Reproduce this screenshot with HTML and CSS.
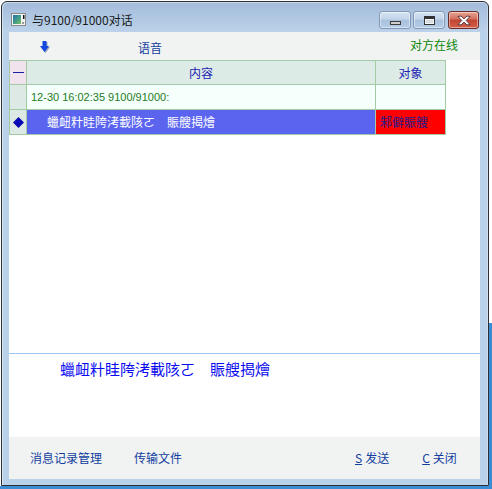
FILE: index.html
```html
<!DOCTYPE html>
<html lang="zh-CN">
<head>
<meta charset="utf-8">
<title>与9100/91000对话</title>
<link rel="stylesheet" href="styles.css">
</head>
<body>
<div class="window">
  <div class="titlebar">
    <svg class="appicon" width="15" height="13" viewBox="0 0 15 13">
      <defs>
        <linearGradient id="ig" x1="0" y1="0" x2="1" y2="1">
          <stop offset="0" stop-color="#2f6fa8"/>
          <stop offset="0.5" stop-color="#3f9a8a"/>
          <stop offset="1" stop-color="#7cc060"/>
        </linearGradient>
      </defs>
      <rect x="0.5" y="0.5" width="14" height="12" fill="#f4f4f4" stroke="#8a8a8a"/>
      <rect x="2" y="2" width="8" height="9" fill="url(#ig)"/>
      <rect x="12" y="2" width="1.5" height="4" fill="#111"/>
      <rect x="11" y="9" width="2" height="2" fill="#9a9a9a"/>
    </svg>
    <span class="title">与9100/91000对话</span>
    <div class="caption">
      <div class="cbtn cmin"><i></i></div>
      <div class="cbtn cmax"><i></i></div>
      <div class="cbtn cclose">
        <svg width="14" height="11" viewBox="0 0 14 11">
          <path d="M1 1.5 L4 1 L7 3.8 L10 1 L13 1.5 L9.2 5.5 L13 9.5 L10 10 L7 7.2 L4 10 L1 9.5 L4.8 5.5 Z" fill="#fff" stroke="#4a2a2a" stroke-width="0.9" stroke-linejoin="round"/>
        </svg>
      </div>
    </div>
  </div>
  <div class="client">
    <div class="toolbar">
      <svg class="arrow" width="11" height="13" viewBox="0 0 11 13">
        <path d="M3.5 1 H7.5 V6 H10 L5.5 12 L1 6 H3.5 Z" fill="#9aa3b8"/>
        <path d="M2.5 0 H6.5 V5 H9 L4.5 11 L0 5 H2.5 Z" fill="#1446e0"/>
      </svg>
      <span class="voice">语音</span>
      <span class="online">对方在线</span>
    </div>
    <div class="chat">
      <div class="grid">
        <div class="cell rh-head"><span class="dash"></span></div>
        <div class="cell head">内容</div>
        <div class="cell head">对象</div>
        <div class="cell rh"></div>
        <div class="cell r1 time">12-30 16:02:35 9100/91000:</div>
        <div class="cell r1"></div>
        <div class="cell rh">
          <svg width="11" height="11" viewBox="0 0 11 11"><path d="M5.5 0 L11 5.5 L5.5 11 L0 5.5 Z" fill="#0a0ab4"/></svg>
        </div>
        <div class="cell sel"><span>蠟衄籵眭陓洘載陔ㄛ</span><span class="sp">賑艘揭燴</span></div>
        <div class="cell red">邾僻賑艘</div>
      </div>
    </div>
    <div class="input"><span>蠟衄籵眭陓洘載陔ㄛ</span><span class="sp">賑艘揭燴</span></div>
    <div class="footer">
      <span class="fitem f1">消息记录管理</span>
      <span class="fitem f2">传输文件</span>
      <span class="fitem f3"><span class="key">S</span>发送</span>
      <span class="fitem f4"><span class="key">C</span>关闭</span>
    </div>
  </div>
</div>
</body>
</html>
```

FILE: styles.css
```css
html, body {
  margin: 0;
  padding: 0;
}
body {
  width: 492px;
  height: 489px;
  overflow: hidden;
  font-family: "Noto Sans CJK SC", "Noto Sans", sans-serif;
  font-size: 12px;
  background:
    linear-gradient(#3b8dd3, #3b8dd3) right bottom / 3px 166px no-repeat,
    linear-gradient(#3b8dd3, #3b8dd3) left bottom / 100% 3px no-repeat,
    #ffffff;
}
.window {
  box-sizing: border-box;
  width: 488px;
  height: 485px;
  margin: 1px 0 0 1px;
  border: 1px solid #2b2f36;
  border-radius: 6px 6px 0 0;
  padding: 0 8px 6px 7px;
  display: flex;
  flex-direction: column;
  background: linear-gradient(#a3bcda 0, #bcd2ea 30px, #bad1ea 30px);
  box-shadow: inset 1px 1px 0 rgba(255,255,255,0.45), inset -1px 0 0 rgba(255,255,255,0.3);
}
.titlebar {
  height: 30px;
  flex: none;
  display: flex;
  align-items: flex-start;
  padding-left: 2px;
}
.appicon {
  margin-top: 11px;
  flex: none;
}
.title {
  margin-top: 10px;
  margin-left: 6px;
  line-height: 16px;
  font-size: 12px;
  color: #1b1b1b;
}
.caption {
  margin-left: auto;
  margin-top: 9px;
  margin-right: 1px;
  display: flex;
}
.cbtn {
  box-sizing: border-box;
  height: 18px;
  width: 32px;
  border: 1px solid #8198b6;
  border-radius: 3px;
  background: linear-gradient(#d6e3f1 0, #c3d5ea 45%, #a9c1dd 50%, #b6cde6 100%);
  display: flex;
  align-items: center;
  justify-content: center;
  box-shadow: inset 0 0 0 1px rgba(255,255,255,0.45);
}
.cmax { margin-left: 2px; }
.cclose {
  margin-left: 3px;
  width: 31px;
  border-color: #6b2a24;
  background: linear-gradient(#e7a594 0, #d26d5b 45%, #c24330 50%, #d2604a 100%);
}
.cmin i {
  display: block;
  width: 11px;
  height: 4px;
  box-sizing: border-box;
  border: 1px solid #3c3c3c;
  background: #cfcfcf;
  margin-top: 6px;
}
.cmax i {
  display: block;
  width: 11px;
  height: 9px;
  box-sizing: border-box;
  border: 1px solid #333;
  border-top-width: 3px;
  background: #d8dde4;
  box-shadow: inset 0 0 0 1px #f6f6f6;
}
.client {
  flex: 1;
  display: flex;
  flex-direction: column;
  background: #ffffff;
}
.toolbar {
  height: 28px;
  flex: none;
  background: #f1f2f2;
  display: flex;
  align-items: flex-start;
  padding-left: 31px;
}
.arrow {
  margin-top: 9px;
  flex: none;
}
.voice {
  margin-left: 87px;
  margin-top: 8px;
  line-height: 16px;
  color: #15409e;
}
.online {
  margin-left: auto;
  margin-right: 22px;
  margin-top: 5px;
  line-height: 16px;
  color: #0b870b;
}
.chat {
  box-sizing: border-box;
  height: 294px;
  flex: none;
  border-bottom: 1px solid #9ec5f0;
}
.grid {
  display: grid;
  grid-template-columns: 16px 348px 69px;
  grid-template-rows: 23px 24px 24px;
  gap: 1px;
  padding: 1px;
  width: max-content;
  background: #a3cba3;
}
.cell {
  font-size: 12px;
  line-height: 23px;
  white-space: nowrap;
  overflow: hidden;
}
.head {
  background: #dcebe5;
  color: #2222b4;
  text-align: center;
}
.rh-head {
  background: #f0e3ee;
  display: flex;
  align-items: center;
  justify-content: center;
}
.dash {
  display: block;
  width: 11px;
  height: 1px;
  background: #1c1ca0;
  margin-top: -1px;
}
.rh {
  background: #dde9e4;
  display: flex;
  align-items: center;
  justify-content: center;
}
.r1 {
  background: #f5fffb;
  line-height: 24px;
}
.time {
  font-family: "Liberation Sans", Arial, sans-serif;
  font-size: 11px;
  color: #1f7d1f;
  padding-left: 4px;
}
.sel {
  background: #5a64ef;
  color: #ffffff;
  padding-left: 20px;
  line-height: 24px;
}
.sp {
  margin-left: 12px;
}
.red {
  background: #ff0000;
  color: #1b1b8a;
  padding-left: 4px;
  line-height: 24px;
}
.input {
  height: 83px;
  flex: none;
  box-sizing: border-box;
  padding: 6px 0 0 51px;
  font-size: 15px;
  line-height: 18px;
  color: #0a0af0;
  white-space: nowrap;
}
.input .sp {
  margin-left: 15px;
}
.footer {
  flex: 1;
  background: #f1f2f2;
  display: flex;
  align-items: center;
  padding-left: 21px;
  color: #12409e;
  line-height: 16px;
}
.f2 { margin-left: 32px; }
.f3 { margin-left: 173px; }
.f4 { margin-left: 33px; }
.key {
  text-decoration: underline;
  margin-right: 3px;
}
```
